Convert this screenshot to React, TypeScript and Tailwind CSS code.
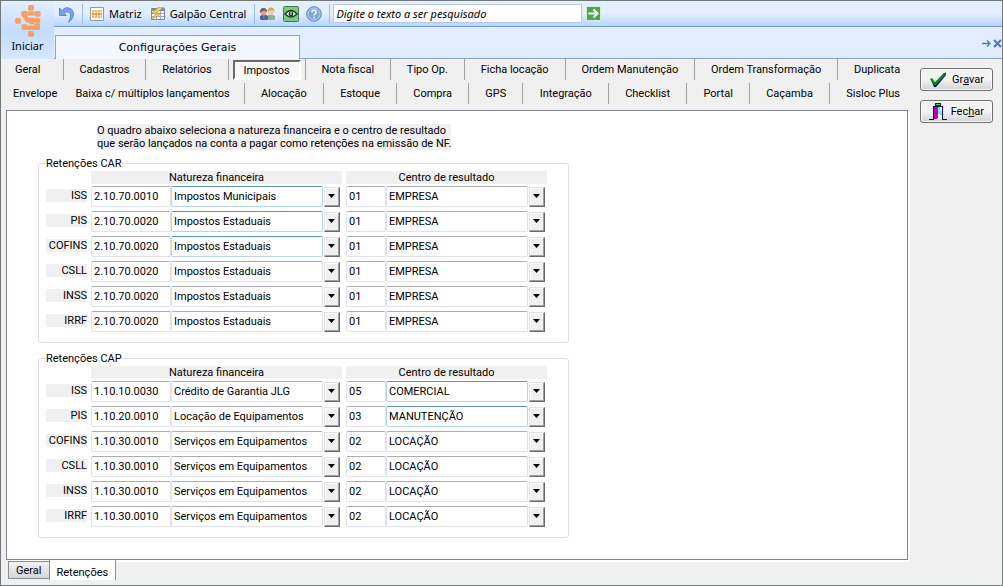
import { useRef } from "react";

interface Line {
  tax: string;
  code: string;
  nature: string;
  center: string;
  result: string;
  hotNature?: boolean;
  hotResult?: boolean;
}

interface Tab {
  name: string;
  className?: string;
}

const car: Line[] = [
  { tax: "ISS", code: "2.10.70.0010", nature: "Impostos Municipais", center: "01", result: "EMPRESA", hotNature: true },
  { tax: "PIS", code: "2.10.70.0020", nature: "Impostos Estaduais", center: "01", result: "EMPRESA", hotNature: true },
  { tax: "COFINS", code: "2.10.70.0020", nature: "Impostos Estaduais", center: "01", result: "EMPRESA", hotNature: true },
  { tax: "CSLL", code: "2.10.70.0020", nature: "Impostos Estaduais", center: "01", result: "EMPRESA" },
  { tax: "INSS", code: "2.10.70.0020", nature: "Impostos Estaduais", center: "01", result: "EMPRESA" },
  { tax: "IRRF", code: "2.10.70.0020", nature: "Impostos Estaduais", center: "01", result: "EMPRESA" },
];

const cap: Line[] = [
  { tax: "ISS", code: "1.10.10.0030", nature: "Crédito de Garantia JLG", center: "05", result: "COMERCIAL", hotResult: true },
  { tax: "PIS", code: "1.10.20.0010", nature: "Locação de Equipamentos", center: "03", result: "MANUTENÇÃO", hotResult: true },
  { tax: "COFINS", code: "1.10.30.0010", nature: "Serviços em Equipamentos", center: "02", result: "LOCAÇÃO" },
  { tax: "CSLL", code: "1.10.30.0010", nature: "Serviços em Equipamentos", center: "02", result: "LOCAÇÃO" },
  { tax: "INSS", code: "1.10.30.0010", nature: "Serviços em Equipamentos", center: "02", result: "LOCAÇÃO" },
  { tax: "IRRF", code: "1.10.30.0010", nature: "Serviços em Equipamentos", center: "02", result: "LOCAÇÃO" },
];

const divider = "border-r border-[#a0a0a0]";

const firstRow: Tab[] = [
  { name: "Geral", className: `flex-none pr-[22px] pl-[14px] ${divider}` },
  { name: "Cadastros" },
  { name: "Relatórios" },
  { name: "Impostos", className: `w-[77px] flex-none ${divider}` },
  { name: "Nota fiscal" },
  { name: "Tipo Op." },
  { name: "Ficha locação" },
  { name: "Ordem Manutenção" },
  { name: "Ordem Transformação" },
  { name: "Duplicata", className: "flex-auto" },
];

const secondRow: Tab[] = [
  { name: "Envelope", className: "flex-none pr-1 pl-3" },
  { name: "Baixa c/ múltiplos lançamentos", className: `flex-none px-[14px] ${divider}` },
  { name: "Alocação" },
  { name: "Estoque" },
  { name: "Compra" },
  { name: "GPS" },
  { name: "Integração" },
  { name: "Checklist" },
  { name: "Portal" },
  { name: "Caçamba" },
  { name: "Sisloc Plus", className: "flex-auto" },
];

function Logo() {
  return (
    <svg width="26" height="32" viewBox="0 0 78 96" fill="#f7a063" aria-hidden="true">
      <rect x="39" y="0" width="18" height="17" rx="5" />
      <rect x="19" y="18" width="18" height="17" rx="4" />
      <rect x="37" y="19" width="22" height="13" />
      <rect x="59" y="18" width="18" height="17" rx="5" />
      <rect x="0" y="39" width="18" height="17" rx="5" />
      <path d="M22 32h14l5 7h16v10h-8l-10 4-9-4z" />
      <path d="M38 38h18l5 10-4 10H44z" />
      <rect x="58" y="39" width="18" height="17" rx="5" />
      <rect x="19" y="58" width="18" height="17" rx="5" />
      <rect x="37" y="62" width="20" height="13" />
      <rect x="57" y="56" width="18" height="19" rx="4" />
      <rect x="39" y="78" width="18" height="17" rx="5" />
    </svg>
  );
}

function UndoIcon() {
  return (
    <svg width="18" height="18" viewBox="0 0 18 18" aria-hidden="true">
      <path d="M1.500 3v7.500h7L6 8c4-2.500 8-.5 6 6l-1.500 3c6-3 7-12 .5-14-3-.8-5.500.5-7 2.500z" fill="#7aa3ea" stroke="#5a86d6" />
    </svg>
  );
}

function GridIcon() {
  return (
    <svg width="14" height="14" viewBox="0 0 14 14" aria-hidden="true">
      <path fill="#fff" stroke="#8a99b5" d="M.5.5h13v13H.5z" />
      <path fill="#f5b556" d="M2 3h10v8H2z" />
      <path fill="#f08a1c" d="M2 6h10v3H2z" />
      <path stroke="#fff6dc" strokeWidth=".7" d="M2 5.500h10M2 8.500h10M4.500 3v8M7.500 3v8M10.500 3v8" />
    </svg>
  );
}

function BranchIcon() {
  return (
    <svg width="16" height="14" viewBox="0 0 16 14" aria-hidden="true">
      <path fill="#fff" stroke="#7588a8" d="M1.500 1.500h13v11h-13z" />
      <path fill="#6f93cf" d="M2 2h12v2H2z" />
      <path stroke="#9aa9c0" d="M2 6.500h12M2 9.500h12M6.500 4v8M10.500 4v8" />
      <path fill="#ffd34d" stroke="#c98c16" strokeWidth=".7" d="M9 0 2 6l4 1-5 6 9-6-4-1 8-6z" />
    </svg>
  );
}

function UsersIcon() {
  return (
    <svg width="17" height="14" viewBox="0 0 17 14" aria-hidden="true">
      <path fill="#86b58c" d="M8 13V9q4-2.500 8 0v3l-1 1z" />
      <circle cx="12" cy="5" r="3" fill="#f3cd9c" />
      <path fill="#d2a654" d="M8.500 5q0-4.500 3.500-4.500T15.500 5l-2-2-3 .5z" />
      <path fill="#3f62b0" d="M1 12V9q4-2.500 8 0v3l-1 1H2z" />
      <circle cx="4.500" cy="5.500" r="3" fill="#e2a183" />
      <path fill="#6b625f" d="M.8 6q0-5 3.700-5T8 5L5 3.500 2 5z" />
      <path fill="#d9534f" d="M4 8.500h1.500V12H4z" />
    </svg>
  );
}

function EyeIcon() {
  return (
    <svg width="16" height="16" viewBox="0 0 16 16" aria-hidden="true">
      <rect x=".5" y=".5" width="15" height="15" rx="1" fill="#84c981" stroke="#3c7f42" />
      <path fill="#e7f5e4" stroke="#1d3a20" strokeWidth="1.300" d="M2 8q6-7 12 0-6 6-12 0z" />
      <circle cx="8" cy="8" r="2.400" fill="#1d3a20" />
      <path stroke="#fff" d="M8 6v3" />
    </svg>
  );
}

function HelpIcon() {
  return (
    <svg width="16" height="16" viewBox="0 0 16 16" fill="none" aria-hidden="true">
      <circle cx="8" cy="8" r="7.300" fill="#7da9dd" stroke="#5a8ac6" />
      <circle cx="8" cy="8" r="6" stroke="#c5dcf5" strokeWidth=".8" />
      <path d="M5.800 6.200q.2-2 2.200-2t2.200 1.800q0 1.100-1.200 1.800-1 .6-1 1.600M8 10.800v1.400" stroke="#fff" strokeWidth="1.500" />
    </svg>
  );
}

function GoIcon() {
  return (
    <svg width="15" height="15" viewBox="0 0 15 15" aria-hidden="true">
      <path fill="#4ca64c" stroke="#d8ecd8" d="M.5.5h14v14H.5z" />
      <path d="M2.500 7.500h9M7.500 3.500l4 4-4 4" fill="none" stroke="#fff" strokeWidth="2" />
    </svg>
  );
}

function CheckIcon() {
  return (
    <svg width="17" height="15" viewBox="0 0 17 15" aria-hidden="true">
      <path fill="#000080" d="M1 8l4 3 9-10h2v2L6 15H4z" />
      <path fill="#009010" d="M0 7l2-1 3 4 8-8 3-2v2L6 13H4z" />
    </svg>
  );
}

function DoorIcon() {
  return (
    <svg width="18" height="17" viewBox="0 0 18 17" shapeRendering="crispEdges" aria-hidden="true">
      <path fill="#003000" d="M6 0h6v3H6z" />
      <path fill="#00ff40" d="M7 1h4v1H7z" />
      <path fill="#fff" d="M9 4h4v12H9z" />
      <path fill="#c000a0" d="M4 4h5v11l-2 1H4z" />
      <path fill="#70e8f0" d="M9 4h2v7H9zM11 8h2v4h-2z" />
      <path fill="none" stroke="#000080" d="M0 16.500h4.500v-13h9v13H18" />
    </svg>
  );
}

function ToolSeparator() {
  return <span className="h-5 w-px bg-[#9dbde8]" />;
}

function TabRow({ items, active }: { items: Tab[]; active?: string }) {
  return (
    <div className="flex h-[21px]">
      {items.map((item) => (
        <div
          key={item.name}
          className={`flex justify-center ${item.className ?? `flex-auto ${divider}`}`}
        >
          {item.name === active ? (
            <button
              type="button"
              className="mx-1 mt-px flex-1 border-2 border-[#696969] border-r-white border-b-white bg-[#f8f8f8] pt-px whitespace-nowrap"
            >
              {item.name}
            </button>
          ) : (
            <button type="button" className="whitespace-nowrap">
              {item.name}
            </button>
          )}
        </div>
      ))}
    </div>
  );
}

function Combo({
  value,
  label,
  hot,
  width,
}: {
  value: string;
  label: string;
  hot?: boolean;
  width: string;
}) {
  const ref = useRef<HTMLSelectElement>(null);

  return (
    <div className="flex items-end gap-px">
      <select
        ref={ref}
        aria-label={label}
        defaultValue={value}
        className={[
          "h-[21px] appearance-none rounded-xs border bg-white px-[2px]",
          width,
          hot
            ? "border-[#b5d5ea] border-t-[#5a94bf]"
            : "border-[#e0e2ea] border-t-[#abadb3]",
        ].join(" ")}
      >
        <option>{value}</option>
      </select>
      <button
        type="button"
        aria-label={`Abrir ${label}`}
        onClick={() => ref.current?.showPicker()}
        className="flex h-5 w-4 items-center justify-center border border-[#e3e3e3] border-r-[#696969] border-b-[#696969] bg-[#f0f0f0] pr-px pb-[2px] shadow-[inset_-1px_-1px_0_#a0a0a0,inset_1px_1px_0_#fff]"
      >
        <svg width="7" height="4" viewBox="0 0 7 4" aria-hidden="true">
          <path d="M0 0h7L3.500 4z" />
        </svg>
      </button>
    </div>
  );
}

const codeField = "h-[21px] rounded-xs border border-[#e0e2ea] border-t-[#abadb3] bg-white px-[2px]";

function Group({ id, title, lines }: { id: string; title: string; lines: Line[] }) {
  return (
    <fieldset className="w-fit rounded-[3px] border border-[#d5dfe5] pr-[21px] pb-[10px] pl-[7px]">
      <legend className="h-[13px]">{title}</legend>

      <div className="mt-px mb-[2px] ml-[45px] flex gap-1 text-center">
        <div className="w-[251px] bg-[#f0f0f0]">Natureza financeira</div>
        <div className="w-[201px] bg-[#f0f0f0]">Centro de resultado</div>
      </div>

      <div className="flex flex-col gap-1">
        {lines.map((line) => (
          <div key={line.tax} className="flex">
            <label
              htmlFor={`${id}-${line.tax}`}
              className="mt-[3px] mr-1 h-[13px] w-[41px] bg-[#f0f0f0] text-right"
            >
              {line.tax}
            </label>
            <input
              id={`${id}-${line.tax}`}
              defaultValue={line.code}
              className={`${codeField} w-20`}
            />
            <Combo
              value={line.nature}
              label={`Natureza financeira ${line.tax}`}
              hot={line.hotNature}
              width="w-[152px]"
            />
            <input
              aria-label={`Centro ${line.tax}`}
              defaultValue={line.center}
              className={`${codeField} ml-[6px] w-10`}
            />
            <Combo
              value={line.result}
              label={`Centro de resultado ${line.tax}`}
              hot={line.hotResult}
              width="w-[142px]"
            />
          </div>
        ))}
      </div>
    </fieldset>
  );
}

function Header() {
  return (
    <header className="flex h-[58px] bg-[#e2eeff] font-['Noto_Sans','Open_Sans',sans-serif] text-[11px]">
      <button
        type="button"
        className="flex w-[53px] flex-col items-center gap-px bg-linear-to-b from-[#e3efff] via-[#c4dcff] to-[#d5e8ff] pt-1"
      >
        <Logo />
        <span className="leading-4">Iniciar</span>
      </button>

      <div className="flex flex-1 flex-col">
        <div className="flex h-[26px] items-center border-b border-[#6f9de0] bg-linear-to-b from-[#e3efff] from-50% to-[#b7d4ff] pl-1">
          <button type="button" aria-label="Desfazer">
            <UndoIcon />
          </button>
          <span className="mr-[7px] ml-[6px] flex">
            <ToolSeparator />
          </span>
          <button type="button" className="flex items-center gap-[5px]">
            <GridIcon />
            Matriz
          </button>
          <button type="button" className="ml-2 flex items-center gap-1">
            <BranchIcon />
            Galpão Central
          </button>
          <span className="mr-1 ml-2 flex">
            <ToolSeparator />
          </span>
          <div className="flex items-center gap-[7px]">
            <button type="button" aria-label="Usuários">
              <UsersIcon />
            </button>
            <button type="button" aria-label="Visualizar">
              <EyeIcon />
            </button>
            <button type="button" aria-label="Ajuda">
              <HelpIcon />
            </button>
            <ToolSeparator />
          </div>
          <input
            aria-label="Pesquisa"
            placeholder="Digite o texto a ser pesquisado"
            className="ml-[3px] h-[19px] w-[249px] border border-[#b3c9e6] bg-white px-[2px] italic placeholder:text-black"
          />
          <button type="button" aria-label="Pesquisar" className="ml-1">
            <GoIcon />
          </button>
        </div>

        <div className="flex flex-1 border-b border-[#8aa5cf]">
          <button
            type="button"
            className="mt-2 -mb-px ml-px w-[245px] border border-b-0 border-[#8aa5cf] bg-[#f3f8ff] font-['DejaVu_Sans',sans-serif]"
          >
            Configurações Gerais
          </button>
          <div className="ml-auto flex items-start pt-3">
            <button type="button" aria-label="Fechar aba" className="flex">
              <svg width="20" height="9" viewBox="0 0 20 9" fill="none" stroke="#4d7ab8" aria-hidden="true">
                <path d="M0 4.500h8M5 1.500l3 3-3 3" strokeWidth="1.300" />
                <path d="M12 1l7 7M19 1l-7 7" strokeWidth="2.200" />
              </svg>
            </button>
          </div>
        </div>
      </div>
    </header>
  );
}

const sideButton =
  "flex h-[23px] items-center justify-end rounded-[3px] border border-[#707070] bg-linear-to-b from-[#f2f2f2] from-50% to-[#d2d2d2] pr-2 shadow-[inset_0_0_0_1px_#fcfcfc]";

export default function App() {
  return (
    <div className="flex min-h-screen flex-col border border-[#707878] bg-[#f0f0f0] font-['Roboto','Liberation_Sans',sans-serif] text-[11px] leading-[13px] text-black">
      <Header />

      <div className="flex flex-1">
        <main className="flex min-w-0 flex-1 flex-col">
          <nav className="flex flex-col gap-[3px]">
            <TabRow items={firstRow} active="Impostos" />
            <TabRow items={secondRow} />
          </nav>

          <section className="mt-[6px] mr-2 ml-[5px] flex-1 border border-[#83838f] bg-white pt-[13px] pl-[31px] shadow-[2px_2px_0_#fff]">
            <p className="ml-[59px] w-fit bg-[#f0f0f0]">
              O quadro abaixo seleciona a natureza financeira e o centro de resultado
              <br />
              que serão lançados na conta a pagar como retenções na emissão de NF.
            </p>
            <div className="mt-[7px] flex flex-col gap-[9px]">
              <Group id="car" title="Retenções CAR" lines={car} />
              <Group id="cap" title="Retenções CAP" lines={cap} />
            </div>
          </section>

          <div className="mb-1 ml-[7px] flex h-[21px] items-start">
            <button
              type="button"
              className="mt-px h-[18px] border border-r-0 border-[#898c95] bg-linear-to-b from-[#f2f2f2] to-[#d6d6d6] px-[7px]"
            >
              Geral
            </button>
            <button
              type="button"
              className="z-10 h-5 border-x border-[#898c95] bg-white px-[7px] pt-1"
            >
              Retenções
            </button>
          </div>
        </main>

        <aside className="flex w-[86px] flex-col gap-[9px] pt-[9px] pr-[9px] pl-1">
          <button type="button" className={`${sideButton} gap-[5px]`}>
            <CheckIcon />
            <span>
              Gr<u>a</u>var
            </span>
          </button>
          <button type="button" className={`${sideButton} gap-1`}>
            <DoorIcon />
            <span>
              Fec<u>h</u>ar
            </span>
          </button>
        </aside>
      </div>
    </div>
  );
}
